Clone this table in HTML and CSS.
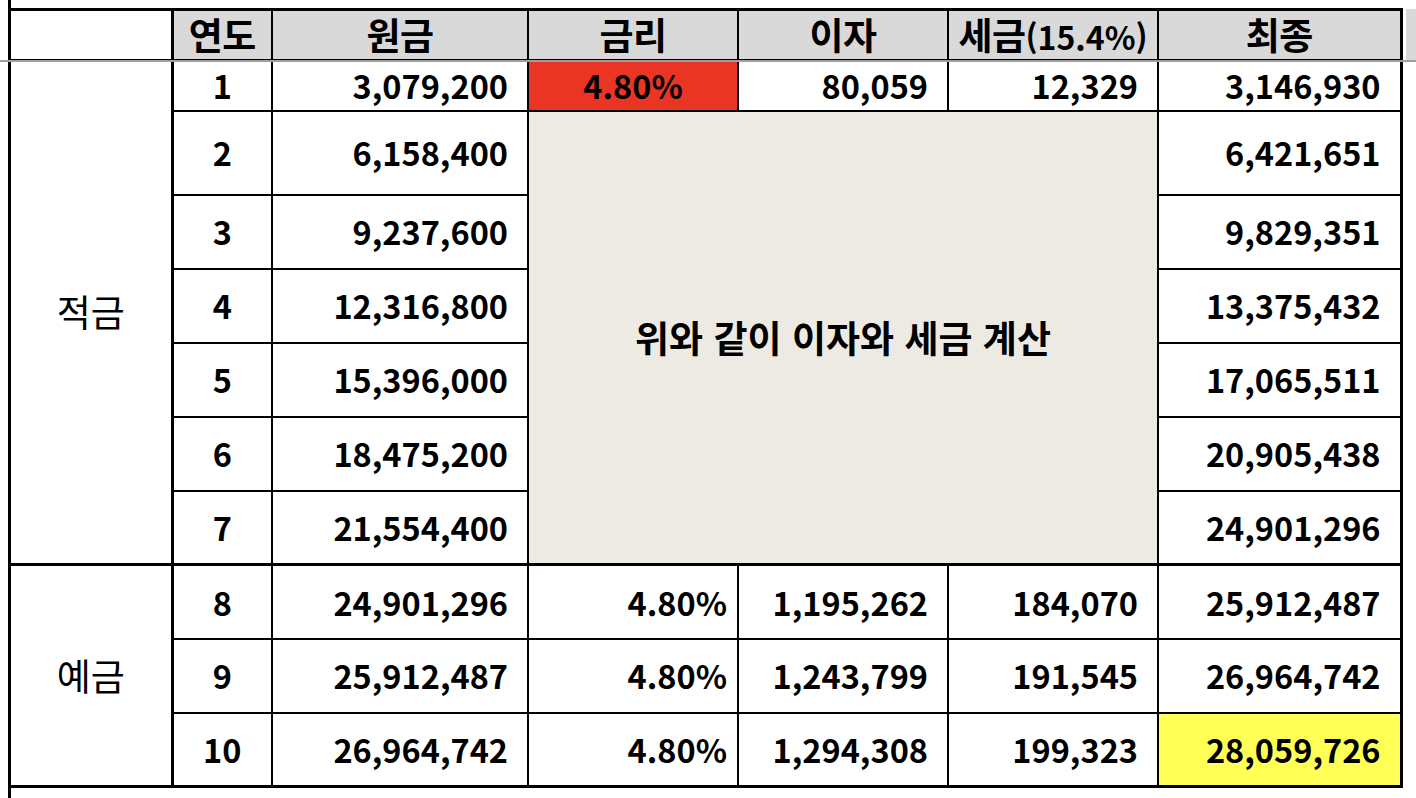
FILE: index.html
```html
<!DOCTYPE html>
<html lang="ko">
<head>
<meta charset="utf-8">
<title>적금 · 예금 계산</title>
<link rel="stylesheet" href="styles.css">
</head>
<body>
<div class="sheet">
  <table class="grid">
    <colgroup>
      <col class="c-label"><col class="c-year"><col class="c-base"><col class="c-rate"><col class="c-int"><col class="c-tax"><col class="c-final">
    </colgroup>
    <thead>
      <tr class="r-head">
        <th class="edge blank"></th>
        <th class="hd">연도</th>
        <th class="hd">원금</th>
        <th class="hd">금리</th>
        <th class="hd">이자</th>
        <th class="hd">세금<span class="hd-num">(15.4%)</span></th>
        <th class="hd">최종</th>
      </tr>
    </thead>
    <tbody>
      <tr class="r1">
        <td class="edge label" rowspan="7">적금</td>
        <td class="year">1</td>
        <td class="num">3,079,200</td>
        <td class="rate hot">4.80%</td>
        <td class="num">80,059</td>
        <td class="num">12,329</td>
        <td class="num">3,146,930</td>
      </tr>
      <tr class="r2">
        <td class="year">2</td>
        <td class="num">6,158,400</td>
        <td class="note" colspan="3" rowspan="6">위와 같이 이자와 세금 계산</td>
        <td class="num">6,421,651</td>
      </tr>
      <tr class="r3">
        <td class="year">3</td>
        <td class="num">9,237,600</td>
        <td class="num">9,829,351</td>
      </tr>
      <tr class="r4">
        <td class="year">4</td>
        <td class="num">12,316,800</td>
        <td class="num">13,375,432</td>
      </tr>
      <tr class="r5">
        <td class="year">5</td>
        <td class="num">15,396,000</td>
        <td class="num">17,065,511</td>
      </tr>
      <tr class="r6">
        <td class="year">6</td>
        <td class="num">18,475,200</td>
        <td class="num">20,905,438</td>
      </tr>
      <tr class="r7">
        <td class="year">7</td>
        <td class="num">21,554,400</td>
        <td class="num">24,901,296</td>
      </tr>
      <tr class="r8 split">
        <td class="edge label" rowspan="3">예금</td>
        <td class="year">8</td>
        <td class="num">24,901,296</td>
        <td class="pct">4.80%</td>
        <td class="num">1,195,262</td>
        <td class="num">184,070</td>
        <td class="num">25,912,487</td>
      </tr>
      <tr class="r9">
        <td class="year">9</td>
        <td class="num">25,912,487</td>
        <td class="pct">4.80%</td>
        <td class="num">1,243,799</td>
        <td class="num">191,545</td>
        <td class="num">26,964,742</td>
      </tr>
      <tr class="r10">
        <td class="year">10</td>
        <td class="num">26,964,742</td>
        <td class="pct">4.80%</td>
        <td class="num">1,294,308</td>
        <td class="num">199,323</td>
        <td class="num total">28,059,726</td>
      </tr>
    </tbody>
  </table>
  <div class="freeze-band"></div>
  <div class="freeze-line"></div>
</div>
</body>
</html>
```

FILE: styles.css
```css
html, body {
  margin: 0;
  padding: 0;
  background: #ffffff;
}

body {
  width: 1416px;
  height: 798px;
  overflow: hidden;
  font-family: "Noto Sans CJK KR", "Noto Sans", sans-serif;
  color: #000000;
}

.sheet {
  position: relative;
  margin-left: 8px;
  border-left: 3px solid #000000;
  height: 798px;
  box-sizing: border-box;
  padding-top: 8px;
}

.grid {
  border-collapse: collapse;
  table-layout: fixed;
  border-top: 3px solid #000000;
  border-right: 3px solid #000000;
  border-bottom: 3px solid #000000;
  font-size: 32.5px;
  line-height: 1;
}

.c-label { width: 161px; }
.c-year  { width: 100px; }
.c-base  { width: 256px; }
.c-rate  { width: 210px; }
.c-int   { width: 210px; }
.c-tax   { width: 210px; }
.c-final { width: 243px; }

.grid th,
.grid td {
  border: 2px solid #000000;
  padding: 0;
  vertical-align: middle;
  white-space: nowrap;
}

.grid .edge {
  border-left: 0;
  border-right: 3px solid #000000;
}

.r-head { height: 50px; }
.r1 { height: 51px; }
.r2 { height: 84px; }
.r3, .r4, .r5, .r6, .r7, .r8, .r9 { height: 74px; }
.r10 { height: 74px; }

.hd {
  background: #d9d9d9;
  font-weight: 700;
  font-size: 37px;
  text-align: center;
  border-bottom: 3px solid #000000;
  letter-spacing: -0.5px;
}

.hd-num {
  font-size: 32px;
  letter-spacing: 0;
}

.blank {
  background: #ffffff;
  border-bottom: 3px solid #000000;
}

.label {
  font-weight: 400;
  font-size: 37px;
  text-align: center;
}

.year {
  font-weight: 700;
  text-align: center;
}

.num {
  font-weight: 700;
  text-align: right;
  padding-right: 19px !important;
}

.pct {
  font-weight: 700;
  text-align: right;
  padding-right: 10px !important;
}

.rate {
  font-weight: 700;
  text-align: center;
}

.hot {
  background: #ea3424;
}

.note {
  background: #edeae3;
  font-weight: 700;
  text-align: center;
  font-size: 37px;
}

.split > td {
  border-top: 3px solid #000000;
}

.grid .total {
  background: #ffff55;
}

.freeze-band {
  position: absolute;
  top: 9px;
  left: 1395px;
  width: 20px;
  height: 51px;
  background: #d9d9d9;
}

.freeze-line {
  position: absolute;
  top: 60px;
  left: -11px;
  width: 1430px;
  height: 2px;
  background: #a0a0a0;
  z-index: 1;
}
```
